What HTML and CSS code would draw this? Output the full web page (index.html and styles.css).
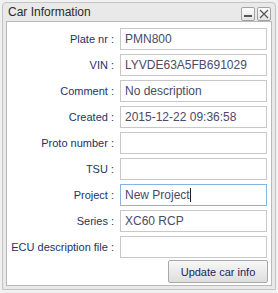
FILE: index.html
```html
<!DOCTYPE html>
<html lang="en">
<head>
    <meta charset="UTF-8">
    <title>Car Information</title>
    <link rel="stylesheet" href="styles.css">
</head>
<body>
    <div class="window">
        <div class="titlebar">
            <span class="title">Car Information</span>
            <div class="tools">
                <span class="tool minimize"><span class="bar"></span></span>
                <span class="tool close">
                    <svg width="10" height="10" viewBox="0 0 10 10">
                        <path d="M1 1 L9 9 M9 1 L1 9" stroke="#555" stroke-width="1.2" fill="none"/>
                    </svg>
                </span>
            </div>
        </div>

        <div class="panel">
            <form id="carInfo" class="form">
                <label>Plate nr :</label>
                <span class="field">PMN800</span>
                <label>VIN :</label>
                <span class="field">LYVDE63A5FB691029</span>
                <label>Comment :</label>
                <span class="field">No description</span>
                <label>Created :</label>
                <span class="field">2015-12-22 09:36:58</span>
                <label>Proto number :</label>
                <span class="field"></span>
                <label>TSU :</label>
                <span class="field"></span>
                <label>Project :</label>
                <span class="field focused">New Project<span class="caret"></span></span>
                <label>Series :</label>
                <span class="field">XC60 RCP</span>
                <label>ECU description file :</label>
                <span class="field"></span>

                <button type="button" class="update">Update car info</button>
            </form>
        </div>
    </div>
</body>
</html>
```

FILE: styles.css
```css
body {
    margin: 0;
    padding: 2px;
    background: #f1f1f1;
    font-family: "Liberation Sans", Arial, sans-serif;
}

.window {
    box-sizing: border-box;
    width: 274px;
    height: 288px;
    border: 1px solid #c4c4c4;
    border-radius: 4px 4px 0 0;
    background: #e9e9e9;
    padding: 0 3px 3px;
    display: flex;
    flex-direction: column;
}

.titlebar {
    height: 18px;
    display: flex;
    align-items: center;
    justify-content: space-between;
    padding-left: 2px;
}

.title {
    font-size: 12px;
    color: #2b2b2b;
}

.tools {
    display: flex;
    gap: 2px;
    margin-right: 1px;
    margin-top: 4px;
}

.tool {
    box-sizing: border-box;
    width: 14px;
    height: 14px;
    border: 1px solid #a2a2a2;
    border-radius: 2px;
    background: linear-gradient(#fdfdfd, #e3e3e3);
    display: flex;
    align-items: center;
    justify-content: center;
}

.minimize {
    align-items: flex-end;
    padding-bottom: 3px;
}

.minimize .bar {
    width: 8px;
    height: 2px;
    background: #555;
}

.panel {
    flex: 1;
    background: #fff;
    border: 1px solid #b9b9b9;
    padding: 6px 4px 0 0;
}

.form {
    display: grid;
    grid-template-columns: 1fr 147px;
    grid-auto-rows: 22px;
    column-gap: 4px;
    row-gap: 4px;
    margin: 0;
}

label {
    font-size: 11px;
    color: #1d3168;
    text-align: right;
    padding-right: 2px;
    display: flex;
    align-items: center;
    justify-content: flex-end;
    white-space: nowrap;
}

.field {
    box-sizing: border-box;
    height: 22px;
    border: 1px solid #c8c8c8;
    padding: 0 3px 0 4px;
    font-size: 12px;
    color: #4b4a68;
    display: flex;
    align-items: center;
    white-space: nowrap;
}

.focused {
    border-color: #86b4e2;
}

.caret {
    display: inline-block;
    width: 1px;
    height: 14px;
    background: #222;
}

.update {
    grid-column: 2;
    justify-self: end;
    box-sizing: border-box;
    width: 100px;
    height: 23px;
    margin: -2px -1px 0 0;
    border: 1px solid #a9a9a9;
    border-radius: 2px;
    background: linear-gradient(#f7f7f7, #dedede);
    font-family: "Liberation Sans", Arial, sans-serif;
    font-size: 11px;
    color: #1a2560;
    padding: 0;
}
```
